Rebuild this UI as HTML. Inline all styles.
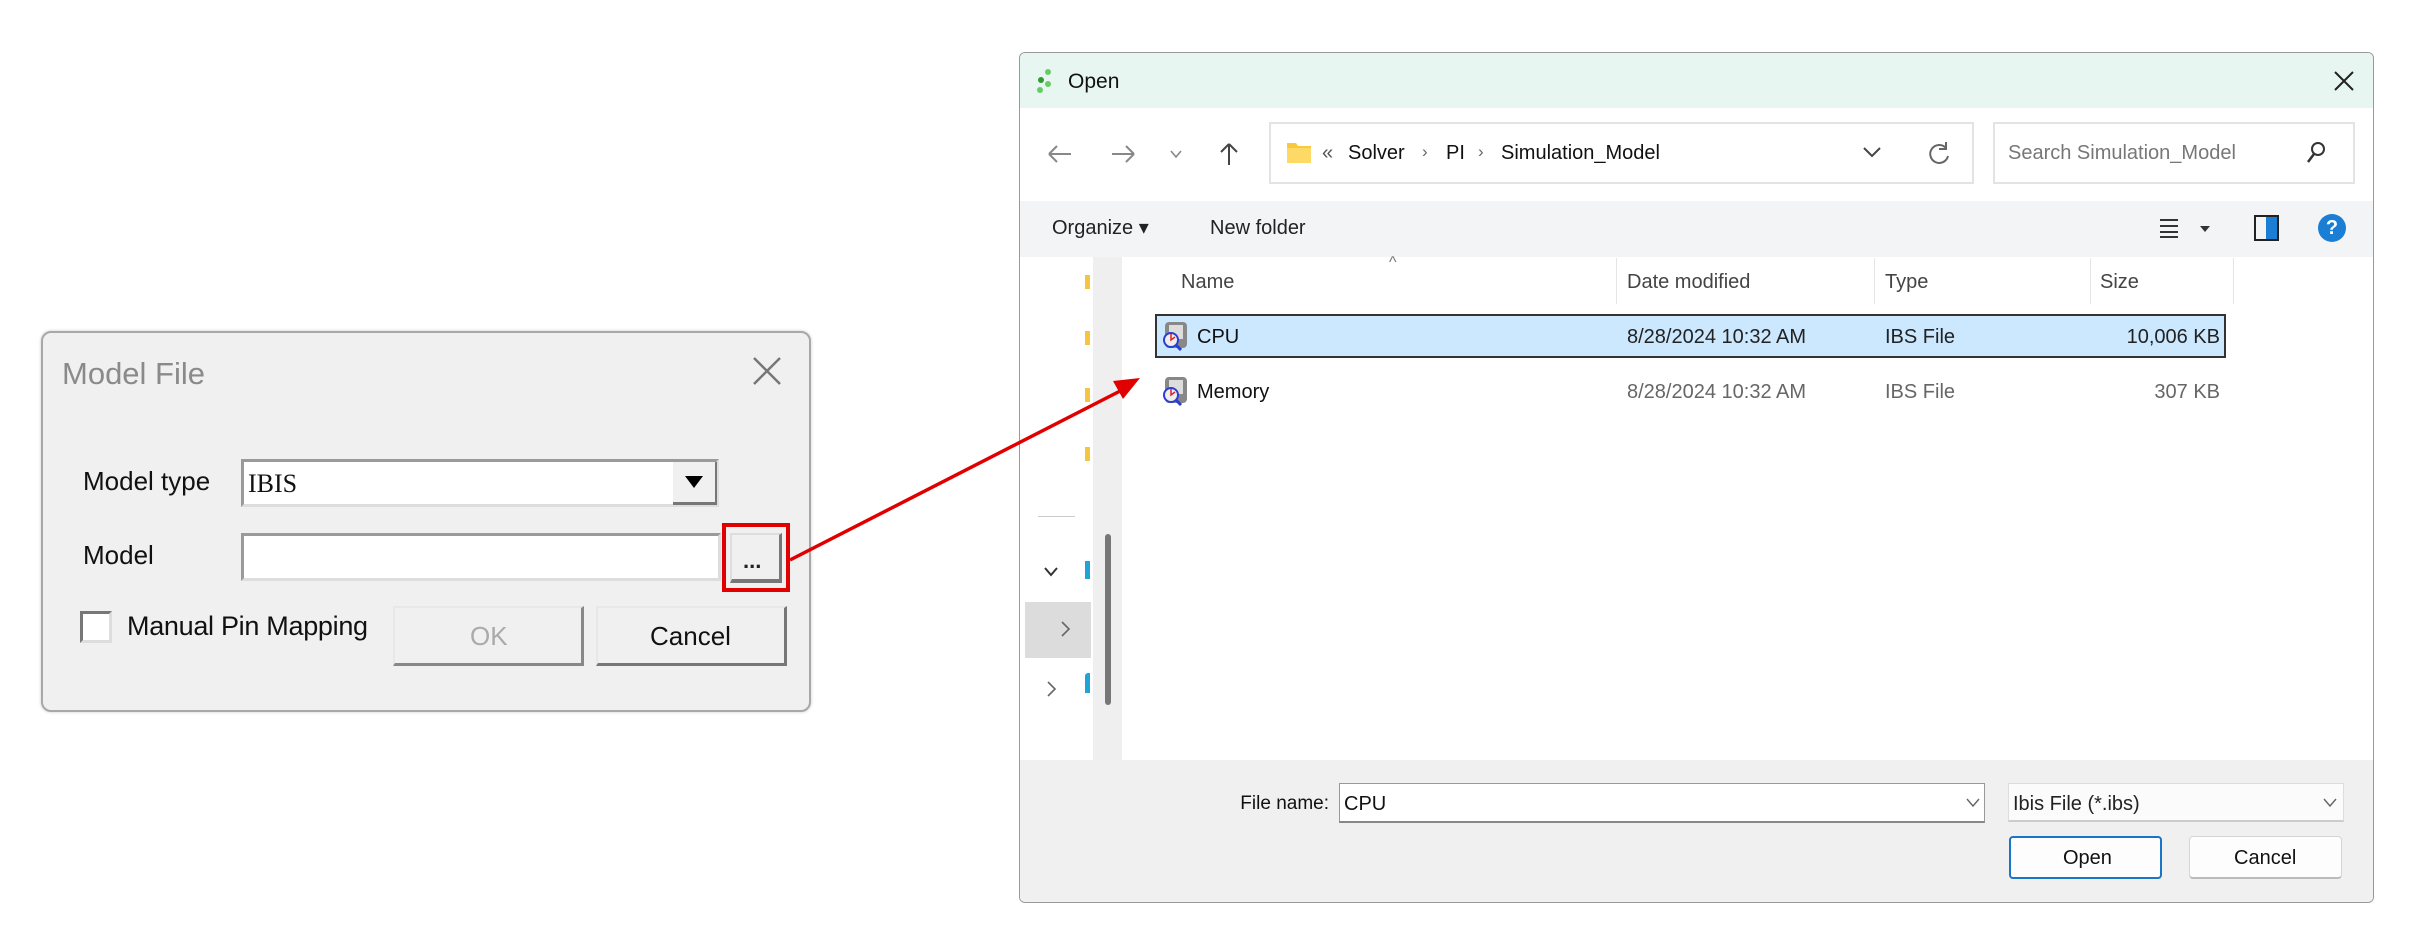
<!DOCTYPE html>
<html><head><meta charset="utf-8"><style>
*{margin:0;padding:0;box-sizing:border-box}
body{width:2412px;height:932px;background:#fff;position:relative;overflow:hidden;font-family:"Liberation Sans",Arial,sans-serif}
.a{position:absolute}
.t{position:absolute;white-space:nowrap;line-height:1}
</style></head><body>

<!-- Model File dialog -->
<div class="a" style="left:41px;top:331px;width:770px;height:381px;background:#f0f0f0;border:2px solid #a8a8a8;border-radius:10px;box-shadow:0 0 3px #ccc"></div>
<div class="t" style="left:62px;top:358px;font-size:31px;color:#8a8a8a">Model File</div>
<svg class="a" style="left:752px;top:356px" width="30" height="30"><path d="M2 2L28 28M28 2L2 28" stroke="#777" stroke-width="2.5"/></svg>
<div class="t" style="left:83px;top:468px;font-size:26px;color:#111">Model type</div>
<div class="a" style="left:241px;top:459px;width:478px;height:48px;background:#fff;border:3px solid #9a9a9a;border-right-color:#ddd;border-bottom-color:#ddd"></div>
<div class="t" style="left:248px;top:471px;font-size:26px;font-family:'Liberation Serif',serif;color:#111">IBIS</div>
<div class="a" style="left:673px;top:462px;width:44px;height:43px;background:#f0f0f0;border-right:2px solid #777;border-bottom:3px solid #777"></div>
<svg class="a" style="left:684px;top:475px" width="20" height="14"><path d="M1 1H19L10 13Z" fill="#000"/></svg>
<div class="t" style="left:83px;top:542px;font-size:26px;color:#111">Model</div>
<div class="a" style="left:241px;top:533px;width:480px;height:48px;background:#fff;border:3px solid #9a9a9a;border-right-color:#ddd;border-bottom-color:#ddd"></div>
<div class="a" style="left:730px;top:533px;width:52px;height:50px;background:#f0f0f0;border:2px solid #ddd;border-right:3px solid #777;border-bottom:4px solid #777"></div>
<div class="t" style="left:743px;top:550px;font-size:22px;font-weight:bold;color:#222">...</div>
<div class="a" style="left:722px;top:523px;width:68px;height:69px;border:4px solid #e00000"></div>
<div class="a" style="left:80px;top:611px;width:32px;height:32px;background:#fff;border:3px solid #777;border-right-color:#ddd;border-bottom-color:#ddd"></div>
<div class="a" style="left:127px;top:610px;width:240px;height:36px;overflow:hidden"><div class="t" style="left:0;top:3px;font-size:27px;color:#111;letter-spacing:-0.3px">Manual Pin Mapping</div></div>
<div class="a" style="left:393px;top:606px;width:191px;height:60px;background:#f0f0f0;border:2px solid #e8e8e8;border-right:3px solid #888;border-bottom:3px solid #888"></div>
<div class="t" style="left:470px;top:623px;font-size:26px;color:#aaa">OK</div>
<div class="a" style="left:596px;top:606px;width:191px;height:60px;background:#f0f0f0;border:2px solid #e8e8e8;border-right:3px solid #777;border-bottom:3px solid #777"></div>
<div class="t" style="left:650px;top:623px;font-size:26px;color:#111">Cancel</div>

<!-- Open dialog -->
<div class="a" style="left:1019px;top:52px;width:1355px;height:851px;background:#fff;border:1px solid #999;border-radius:6px;overflow:hidden">
  <div class="a" style="left:0;top:0;width:100%;height:55px;background:#e8f6f2"></div>
  <div class="a" style="left:0;top:148px;width:100%;height:56px;background:#f3f4f5"></div>
  <div class="a" style="left:0;top:707px;width:100%;height:144px;background:#f0f0f0"></div>
  <div class="a" style="left:73px;top:204px;width:29px;height:503px;background:#efefef"></div>
  <div class="a" style="left:85px;top:481px;width:6px;height:171px;background:#777;border-radius:3px"></div>
</div>
<svg class="a" style="left:1036px;top:68px" width="18" height="26"><circle cx="12" cy="4" r="3" fill="#6c6"/><circle cx="5" cy="12" r="3" fill="#393"/><circle cx="12" cy="16" r="3" fill="#6c6"/><circle cx="4" cy="22" r="3" fill="#6c6"/></svg>
<div class="t" style="left:1068px;top:71px;font-size:21px;color:#111">Open</div>
<svg class="a" style="left:2333px;top:70px" width="22" height="22"><path d="M2 2L20 20M20 2L2 20" stroke="#222" stroke-width="2"/></svg>

<svg class="a" style="left:1045px;top:141px" width="200" height="26" fill="none" stroke="#888" stroke-width="2"><path d="M4 13H26M4 13L12 5M4 13L12 21"/><path d="M67 13H89M89 13L81 5M89 13L81 21"/><path d="M126 10L131 16L136 10" stroke-width="1.6"/><path d="M184 24V3M184 3L176 11M184 3L192 11" stroke="#444"/></svg>
<div class="a" style="left:1269px;top:122px;width:705px;height:62px;background:#fff;border:2px solid #e3e3e3"></div>
<svg class="a" style="left:1286px;top:140px" width="26" height="24"><path d="M1 3H10L12 6H25V23H1Z" fill="#f8c93a"/><path d="M1 8H25V23H1Z" fill="#ffd966"/></svg>
<div class="t" style="left:1322px;top:143px;font-size:20px;color:#555">«</div>
<div class="t" style="left:1348px;top:143px;font-size:20px;color:#111">Solver</div>
<div class="t" style="left:1422px;top:143px;font-size:17px;color:#666">›</div>
<div class="t" style="left:1446px;top:143px;font-size:20px;color:#111">PI</div>
<div class="t" style="left:1478px;top:143px;font-size:17px;color:#666">›</div>
<div class="t" style="left:1501px;top:143px;font-size:20px;color:#111">Simulation_Model</div>
<svg class="a" style="left:1862px;top:145px" width="20" height="14"><path d="M2 3L10 11L18 3" stroke="#444" stroke-width="2" fill="none"/></svg>
<svg class="a" style="left:1926px;top:140px" width="26" height="28"><path d="M20 8A9 9 0 1 0 22 16" stroke="#666" stroke-width="2" fill="none"/><path d="M20 2V9H13" stroke="#666" stroke-width="2" fill="none"/></svg>
<div class="a" style="left:1993px;top:122px;width:362px;height:62px;background:#fff;border:2px solid #e3e3e3"></div>
<div class="t" style="left:2008px;top:143px;font-size:20px;color:#777">Search Simulation_Model</div>
<svg class="a" style="left:2306px;top:141px" width="20" height="24"><circle cx="12" cy="8" r="6" stroke="#333" stroke-width="2" fill="none"/><path d="M8 13L2 21" stroke="#333" stroke-width="2.5"/></svg>

<div class="t" style="left:1052px;top:218px;font-size:20px;color:#222">Organize ▾</div>
<div class="t" style="left:1210px;top:218px;font-size:20px;color:#222">New folder</div>
<svg class="a" style="left:2158px;top:216px" width="60" height="24"><path d="M2 4H20M2 10H20M2 16H20M2 21H20" stroke="#333" stroke-width="2"/><path d="M42 10H52L47 16Z" fill="#333"/></svg>
<div class="a" style="left:2254px;top:215px;width:25px;height:26px;border:2px solid #222"></div>
<div class="a" style="left:2266px;top:217px;width:11px;height:22px;background:#1a7fd4"></div>
<div class="a" style="left:2318px;top:214px;width:28px;height:28px;border-radius:50%;background:#1a7fd4;color:#fff;font-size:20px;text-align:center;line-height:28px;font-weight:bold">?</div>

<!-- nav pane bits -->
<div class="a" style="left:1085px;top:275px;width:5px;height:14px;background:#f6c440"></div>
<div class="a" style="left:1085px;top:331px;width:5px;height:14px;background:#f6c440"></div>
<div class="a" style="left:1085px;top:388px;width:5px;height:14px;background:#f6c440"></div>
<div class="a" style="left:1085px;top:447px;width:5px;height:14px;background:#f6c440"></div>
<div class="a" style="left:1038px;top:516px;width:37px;height:1px;background:#ccc"></div>
<svg class="a" style="left:1043px;top:566px" width="16" height="12"><path d="M2 2L8 9L14 2" stroke="#333" stroke-width="2" fill="none"/></svg>
<div class="a" style="left:1085px;top:561px;width:5px;height:18px;background:#1fa3d8"></div>
<div class="a" style="left:1025px;top:602px;width:66px;height:56px;background:#dcdcdc"></div>
<svg class="a" style="left:1060px;top:620px" width="12" height="18"><path d="M2 2L9 9L2 16" stroke="#666" stroke-width="1.6" fill="none"/></svg>
<svg class="a" style="left:1046px;top:680px" width="12" height="18"><path d="M2 2L9 9L2 16" stroke="#666" stroke-width="1.6" fill="none"/></svg>
<div class="a" style="left:1085px;top:673px;width:5px;height:20px;background:#1fa3d8;border-radius:3px 0 0 0"></div>

<!-- headers -->
<div class="t" style="left:1389px;top:255px;font-size:16px;color:#777">^</div>
<div class="t" style="left:1181px;top:272px;font-size:20px;color:#444">Name</div>
<div class="t" style="left:1627px;top:272px;font-size:20px;color:#444">Date modified</div>
<div class="t" style="left:1885px;top:272px;font-size:20px;color:#444">Type</div>
<div class="t" style="left:2100px;top:272px;font-size:20px;color:#444">Size</div>
<div class="a" style="left:1616px;top:258px;width:1px;height:46px;background:#e5e5e5"></div>
<div class="a" style="left:1874px;top:258px;width:1px;height:46px;background:#e5e5e5"></div>
<div class="a" style="left:2090px;top:258px;width:1px;height:46px;background:#e5e5e5"></div>
<div class="a" style="left:2233px;top:258px;width:1px;height:46px;background:#e5e5e5"></div>

<!-- rows -->
<div class="a" style="left:1155px;top:314px;width:1071px;height:44px;background:#cce8ff;border:2px solid #333"></div>
<svg class="a" style="left:1161px;top:321px" width="28" height="30"><rect x="4" y="1" width="22" height="26" rx="4" fill="#888"/><rect x="8" y="4" width="14" height="14" fill="#ddd"/><circle cx="10" cy="19" r="7" fill="#eee" stroke="#2a3fcf" stroke-width="2"/><path d="M10 13V19L14 16" stroke="#d22" stroke-width="1.5" fill="none"/><path d="M15 24L20 29" stroke="#2a3fcf" stroke-width="3"/></svg>
<div class="t" style="left:1197px;top:327px;font-size:20px;color:#111">CPU</div>
<div class="t" style="left:1627px;top:327px;font-size:20px;color:#222">8/28/2024 10:32 AM</div>
<div class="t" style="left:1885px;top:327px;font-size:20px;color:#222">IBS File</div>
<div class="t" style="left:2100px;top:327px;width:120px;text-align:right;font-size:20px;color:#222">10,006 KB</div>
<svg class="a" style="left:1161px;top:376px" width="28" height="30"><rect x="4" y="1" width="22" height="26" rx="4" fill="#888"/><rect x="8" y="4" width="14" height="14" fill="#ddd"/><circle cx="10" cy="19" r="7" fill="#eee" stroke="#2a3fcf" stroke-width="2"/><path d="M10 13V19L14 16" stroke="#d22" stroke-width="1.5" fill="none"/><path d="M15 24L20 29" stroke="#2a3fcf" stroke-width="3"/></svg>
<div class="t" style="left:1197px;top:382px;font-size:20px;color:#111">Memory</div>
<div class="t" style="left:1627px;top:382px;font-size:20px;color:#666">8/28/2024 10:32 AM</div>
<div class="t" style="left:1885px;top:382px;font-size:20px;color:#666">IBS File</div>
<div class="t" style="left:2100px;top:382px;width:120px;text-align:right;font-size:20px;color:#666">307 KB</div>

<!-- bottom -->
<div class="t" style="left:1233px;top:794px;width:96px;text-align:right;font-size:19px;color:#111">File name:</div>
<div class="a" style="left:1339px;top:783px;width:646px;height:40px;background:#fff;border:1px solid #999;border-bottom:2px solid #888"></div>
<div class="t" style="left:1344px;top:794px;font-size:20px;color:#111">CPU</div>
<svg class="a" style="left:1966px;top:798px" width="14" height="10"><path d="M1 1L7 8L13 1" stroke="#666" stroke-width="1.4" fill="none"/></svg>
<div class="a" style="left:2008px;top:783px;width:336px;height:39px;background:#fbfbfb;border:1px solid #ddd;border-bottom:2px solid #ccc"></div>
<div class="t" style="left:2013px;top:794px;font-size:20px;color:#222">Ibis File (*.ibs)</div>
<svg class="a" style="left:2323px;top:798px" width="14" height="10"><path d="M1 1L7 8L13 1" stroke="#666" stroke-width="1.4" fill="none"/></svg>
<div class="a" style="left:2009px;top:836px;width:153px;height:43px;background:#fdfdfd;border:2px solid #1a74c9;border-radius:4px"></div>
<div class="t" style="left:2063px;top:848px;font-size:20px;color:#111">Open</div>
<div class="a" style="left:2189px;top:836px;width:153px;height:43px;background:#fdfdfd;border:1px solid #d5d5d5;border-bottom:2px solid #bbb;border-radius:4px"></div>
<div class="t" style="left:2234px;top:848px;font-size:20px;color:#111">Cancel</div>

<!-- Arrow (on top) -->
<svg class="a" style="left:0;top:0" width="2412" height="932"><path d="M790 560L1126 388" stroke="#e00000" stroke-width="3.5"/><path d="M1140 378L1113 381L1123 399Z" fill="#e00000"/></svg>
</body></html>
